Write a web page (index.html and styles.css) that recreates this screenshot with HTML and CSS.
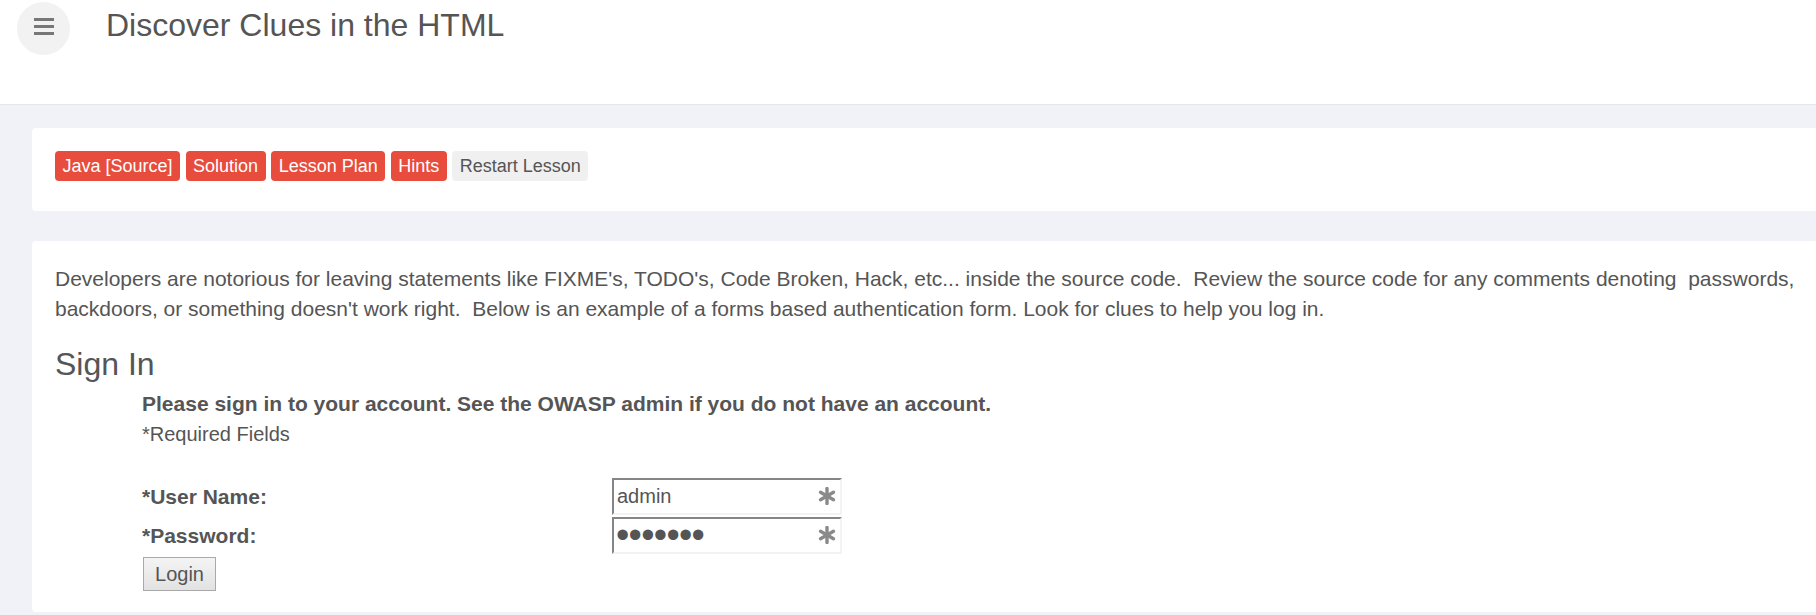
FILE: index.html
```html
<!DOCTYPE html>
<html>
<head>
<meta charset="utf-8">
<title>Discover Clues in the HTML</title>
<link rel="stylesheet" href="styles.css">
</head>
<body>
<header class="topbar">
  <button class="menu-btn" aria-label="menu">
    <svg width="20" height="17" viewBox="0 0 20 17"><rect x="0" y="0" width="20" height="3" fill="#777"/><rect x="0" y="7" width="20" height="3" fill="#777"/><rect x="0" y="14" width="20" height="3" fill="#777"/></svg>
  </button>
  <h1 class="page-title">Discover Clues in the HTML</h1>
</header>
<main class="main">
  <section class="card card-tools">
    <a class="lesson-btn red">Java [Source]</a>
    <a class="lesson-btn red">Solution</a>
    <a class="lesson-btn red">Lesson Plan</a>
    <a class="lesson-btn red">Hints</a>
    <a class="lesson-btn gray">Restart Lesson</a>
  </section>
  <section class="card card-content">
    <p class="lesson-text">Developers are notorious for leaving statements like FIXME's, TODO's, Code Broken, Hack, etc... inside the source code.&nbsp; Review the source code for any comments denoting&nbsp; passwords,<br>backdoors, or something doesn't work right.&nbsp; Below is an example of a forms based authentication form. Look for clues to help you log in.</p>
    <h3 class="sign-title">Sign In</h3>
    <form class="login-form">
      <div class="intro">Please sign in to your account. See the OWASP admin if you do not have an account.</div>
      <div class="req">*Required Fields</div>
      <div class="spacer"></div>
      <label class="field-label">*User Name:</label>
      <div class="field">
        <input class="text-input" type="text" value="admin">
        <svg class="req-star" width="18" height="18" viewBox="0 0 18 18"><g stroke="#8a8a8a" stroke-width="3.4" stroke-linecap="round"><line x1="9" y1="1.5" x2="9" y2="16.5"/><line x1="2.5" y1="5.25" x2="15.5" y2="12.75"/><line x1="2.5" y1="12.75" x2="15.5" y2="5.25"/></g></svg>
      </div>
      <label class="field-label">*Password:</label>
      <div class="field field-pw">
        <input class="text-input pw-input" type="password" value="1234567">
        <svg class="req-star" width="18" height="18" viewBox="0 0 18 18"><g stroke="#8a8a8a" stroke-width="3.4" stroke-linecap="round"><line x1="9" y1="1.5" x2="9" y2="16.5"/><line x1="2.5" y1="5.25" x2="15.5" y2="12.75"/><line x1="2.5" y1="12.75" x2="15.5" y2="5.25"/></g></svg>
      </div>
      <div class="submit-row"><button type="button" class="login-btn">Login</button></div>
    </form>
  </section>
</main>
</body>
</html>
```
FILE: styles.css
```css
html, body {
  margin: 0;
  padding: 0;
}
body {
  background: #f0f2f7;
  font-family: "Liberation Sans", Arial, sans-serif;
  color: #555;
  overflow: hidden;
}
.topbar {
  height: 104px;
  background: #fff;
  border-bottom: 1px solid #e4e6ea;
  display: flex;
  align-items: flex-start;
}
.menu-btn {
  width: 53px;
  height: 53px;
  margin: 2px 0 0 17px;
  border: none;
  border-radius: 50%;
  background: #f2f2f2;
  display: flex;
  align-items: center;
  justify-content: center;
  padding: 0 0 4px 0;
}
.page-title {
  margin: 5px 0 0 36px;
  font-size: 32px;
  line-height: 40px;
  font-weight: normal;
  color: #555;
}
.main {
  padding: 23px 0 0 32px;
}
.card {
  background: #fff;
  border-radius: 4px 0 0 4px;
}
.card-tools {
  padding: 23px 23px 30px;
  display: flex;
  gap: 5.5px;
}
.lesson-btn {
  display: inline-block;
  height: 30px;
  line-height: 30px;
  padding: 0 7.5px;
  font-size: 18px;
  border-radius: 4px;
  white-space: nowrap;
}
.lesson-btn.red {
  background: #e74c3c;
  color: #fff;
}
.lesson-btn.gray {
  background: #f0f0f0;
  color: #555;
}
.card-content {
  margin-top: 30px;
  padding: 23px 10px 21px 23px;
}
.lesson-text {
  margin: 0;
  font-size: 21px;
  line-height: 30px;
  white-space: nowrap;
}
.sign-title {
  margin: 23px 0 0;
  font-size: 32px;
  line-height: 35px;
  font-weight: normal;
}
.login-form {
  margin: 7px 0 0 87px;
  display: grid;
  grid-template-columns: 470px 230px;
}
.intro {
  grid-column: 1 / 3;
  font-weight: bold;
  font-size: 21px;
  line-height: 30px;
  white-space: nowrap;
}
.req {
  grid-column: 1 / 3;
  font-size: 20px;
  line-height: 30px;
}
.spacer {
  grid-column: 1 / 3;
  height: 28px;
}
.field-label {
  font-weight: bold;
  font-size: 21px;
  height: 39px;
  display: flex;
  align-items: center;
}
.field {
  position: relative;
  height: 39px;
  padding-top: 1px;
  box-sizing: border-box;
}
.text-input {
  width: 230px;
  height: 37px;
  box-sizing: border-box;
  border-top: 2px solid #858585;
  border-left: 2px solid #858585;
  border-right: 2px solid #f3f3f3;
  border-bottom: 2px solid #f3f3f3;
  padding: 0 30px 0 3px;
  margin: 0;
  font-family: "Liberation Sans", Arial, sans-serif;
  font-size: 20px;
  color: #555;
  background: #fff;
  outline: none;
}
.pw-input {
  font-size: 38px;
  letter-spacing: -0.7px;
  padding-left: 2px;
}
.req-star {
  position: absolute;
  right: 6px;
  top: 10px;
}
.submit-row {
  grid-column: 1 / 3;
  padding-top: 2px;
}
.login-btn {
  margin-left: 1px;
  width: 73px;
  height: 34px;
  font-family: "Liberation Sans", Arial, sans-serif;
  font-size: 20px;
  color: #555;
  border: 1px solid #a9a9a9;
  border-radius: 0;
  background: linear-gradient(#f4f4f4, #e2e2e2);
  padding: 0;
}
```
